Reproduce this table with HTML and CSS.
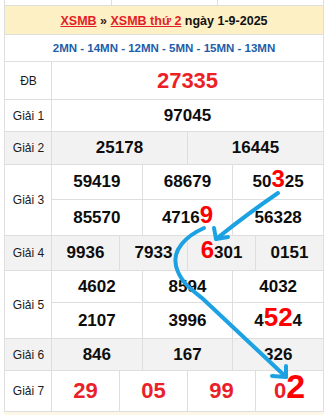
FILE: index.html
```html
<!DOCTYPE html>
<html lang="vi">
<head>
<meta charset="utf-8">
<title>XSMB thứ 2 ngày 1-9-2025</title>
<link rel="stylesheet" href="styles.css">
</head>
<body>
<div class="page">
  <div class="prev"><div class="pc"></div><div class="pc"></div><div class="pc"></div></div>
  <div class="board">
    <div class="title"><span class="ttext"><a href="#">XSMB</a> <span class="sep">»</span> <a href="#">XSMB thứ 2</a> ngày 1-9-2025</span></div>
    <div class="links"><span class="ltext"><a href="#">2MN</a> - <a href="#">14MN</a> - <a href="#">12MN</a> - <a href="#">5MN</a> - <a href="#">15MN</a> - <a href="#">13MN</a></span></div>

    <div class="row r-db">
      <div class="lbl">ĐB</div>
      <div class="cells c1"><div class="cell"><span class="num db">27335</span></div></div>
    </div>
    <div class="row r-g1">
      <div class="lbl">Giải 1</div>
      <div class="cells c1"><div class="cell"><span class="num">97045</span></div></div>
    </div>
    <div class="row r-g2 alt">
      <div class="lbl">Giải 2</div>
      <div class="cells c2">
        <div class="cell"><span class="num">25178</span></div>
        <div class="cell"><span class="num">16445</span></div>
      </div>
    </div>
    <div class="row r-g3">
      <div class="lbl">Giải 3</div>
      <div class="cells c3 g3">
        <div class="cell"><span class="num">59419</span></div>
        <div class="cell"><span class="num">68679</span></div>
        <div class="cell"><span class="num">50<span class="hl">3</span>25</span></div>
        <div class="cell"><span class="num">85570</span></div>
        <div class="cell"><span class="num">4716<span class="hl">9</span></span></div>
        <div class="cell"><span class="num">56328</span></div>
      </div>
    </div>
    <div class="row r-g4 alt">
      <div class="lbl">Giải 4</div>
      <div class="cells c4">
        <div class="cell"><span class="num">9936</span></div>
        <div class="cell"><span class="num">7933</span></div>
        <div class="cell"><span class="num"><span class="hl">6</span>301</span></div>
        <div class="cell"><span class="num">0151</span></div>
      </div>
    </div>
    <div class="row r-g5">
      <div class="lbl">Giải 5</div>
      <div class="cells c3 g5">
        <div class="cell"><span class="num">4602</span></div>
        <div class="cell"><span class="num">8594</span></div>
        <div class="cell"><span class="num">4032</span></div>
        <div class="cell"><span class="num">2107</span></div>
        <div class="cell"><span class="num">3996</span></div>
        <div class="cell"><span class="num">4<span class="hl hl52">52</span>4</span></div>
      </div>
    </div>
    <div class="row r-g6 alt">
      <div class="lbl">Giải 6</div>
      <div class="cells c3">
        <div class="cell"><span class="num">846</span></div>
        <div class="cell"><span class="num">167</span></div>
        <div class="cell"><span class="num">326</span></div>
      </div>
    </div>
    <div class="row r-g7">
      <div class="lbl">Giải 7</div>
      <div class="cells c4">
        <div class="cell"><span class="num g7">29</span></div>
        <div class="cell"><span class="num g7">05</span></div>
        <div class="cell"><span class="num g7">99</span></div>
        <div class="cell"><span class="num g7">0<span class="hl hl2">2</span></span></div>
      </div>
    </div>
  </div>
  <div class="foot"></div>

  <svg class="arrows" width="325" height="415" viewBox="0 0 325 415" aria-hidden="true">
    <g fill="none" stroke="#1ca2e3" stroke-width="4" stroke-linecap="round" stroke-linejoin="round">
      <path d="M278,193 Q250,212 216,239"/>
      <path d="M214,228 L216,239 L228,237"/>
      <path d="M204,228 C186,236 172,250 176,266 C180,282 192,290 202,298 L286,377"/>
      <path d="M272,376 L286,377 L286,366"/>
    </g>
  </svg>
</div>
</body>
</html>
```
FILE: styles.css
```css
* { box-sizing: border-box; }

html, body {
  margin: 0;
  padding: 0;
  background: #fff;
}

body {
  font-family: "Liberation Sans", Arial, sans-serif;
  color: #111;
}

.page {
  position: relative;
  width: 325px;
  height: 415px;
  overflow: hidden;
}

.prev {
  display: grid;
  grid-template-columns: 106px 106px 1fr;
  margin-left: 4px;
  width: 320px;
  height: 6px;
  border-left: 1px solid #dedede;
  border-right: 1px solid #dedede;
  border-bottom: 1px solid #dedede;
}

.pc + .pc { border-left: 1px solid #dedede; }

.board {
  margin-left: 4px;
  width: 320px;
  border-left: 1px solid #dedede;
  border-right: 1px solid #dedede;
}

.title {
  height: 29px;
  background: #fdf0c4;
  border-bottom: 1px solid #dedede;
  display: flex;
  align-items: center;
  justify-content: center;
  font-size: 12.5px;
  font-weight: bold;
  color: #111;
  white-space: nowrap;
  padding-top: 1px;
}

.title a {
  color: #e41e26;
  text-decoration: underline;
}

.title .sep { color: #3a1a1a; }

.links {
  height: 27px;
  border-bottom: 1px solid #dedede;
  display: flex;
  align-items: center;
  justify-content: center;
  font-size: 11.5px;
  font-weight: bold;
  color: #1c5ea9;
  white-space: nowrap;
}

.links a {
  color: #1c5ea9;
  text-decoration: none;
}

.row {
  display: flex;
  border-bottom: 1px solid #dedede;
  background: #fff;
}

.row.alt { background: #f2f2f2; }

.lbl {
  width: 47px;
  flex: none;
  border-right: 1px solid #dedede;
  display: flex;
  align-items: center;
  justify-content: center;
  font-size: 12px;
  color: #1a1a1a;
  padding-left: 1px;
}

.cells {
  flex: 1;
  display: grid;
  gap: 1px;
  background: #dedede;
}

.c1 { grid-template-columns: 1fr; }
.c2 { grid-template-columns: 1fr 1fr; }
.c3 { grid-template-columns: 1fr 1fr 1fr; }
.c4 { grid-template-columns: 1fr 1fr 1fr 1fr; }

.cell {
  background: #fff;
  display: flex;
  align-items: center;
  justify-content: center;
  overflow: visible;
}

.row.alt .cell { background: #f2f2f2; }

.r-db { height: 38px; }
.r-g1 { height: 32px; }
.r-g2 { height: 33px; }
.r-g3 { height: 71px; }
.g3 { grid-template-rows: 34px 35px; }
.r-g4 { height: 35px; }
.r-g5 { height: 68px; }
.g5 { grid-template-rows: 31px 35px; }
.r-g6 { height: 32px; }
.r-g7 { height: 41px; }

.num {
  font-size: 17px;
  font-weight: bold;
  line-height: 20px;
  color: #0d0d0d;
  white-space: nowrap;
}

.num.db {
  font-size: 22px;
  color: #ec1f27;
  line-height: 24px;
}

.num.g7 {
  font-size: 22px;
  color: #e9212a;
  line-height: 24px;
}

.hl {
  color: #ff0000;
  font-size: 24px;
  line-height: 0;
}

.hl52 { font-size: 26px; }
.hl2 { font-size: 34px; }

.foot {
  margin-left: 4px;
  width: 320px;
  height: 10px;
  background: #fdf8e6;
}

.arrows {
  position: absolute;
  left: 0;
  top: 0;
  pointer-events: none;
}
```
